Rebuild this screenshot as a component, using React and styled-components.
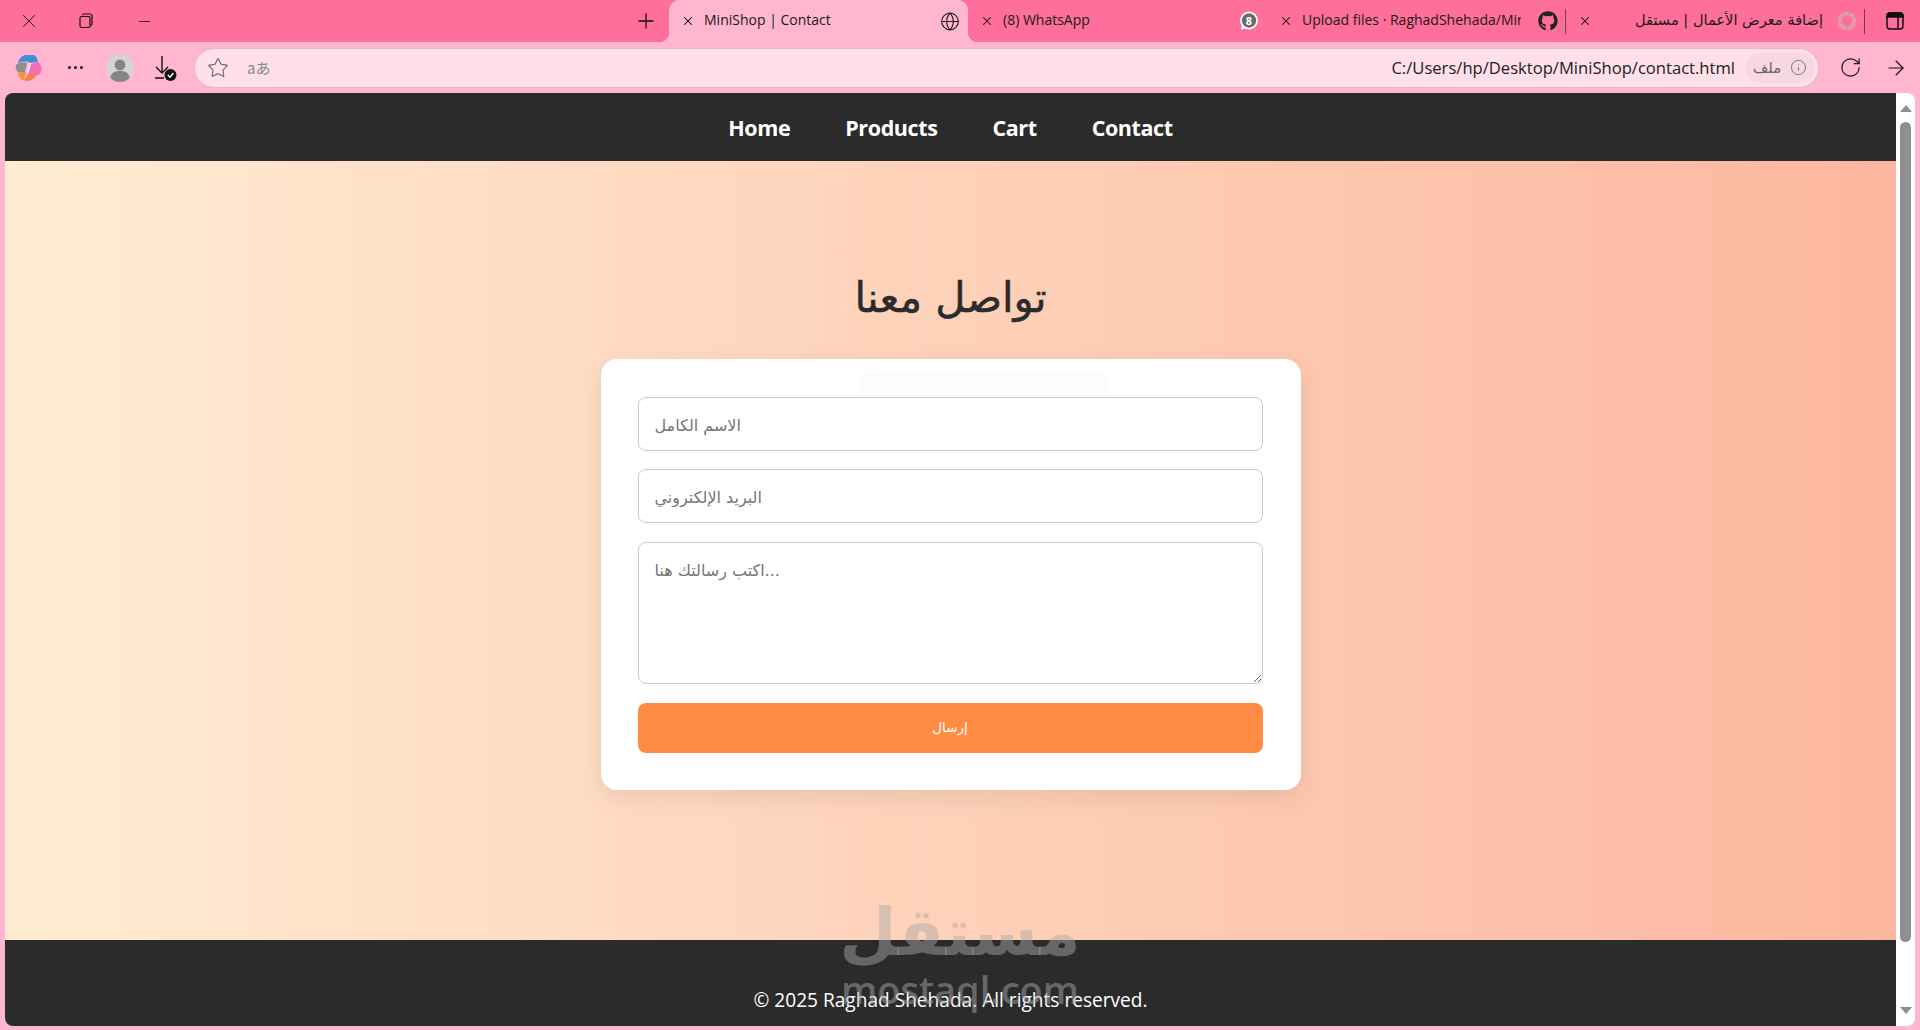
import React from "react";
import styled, { createGlobalStyle } from "styled-components";
import { X, Plus, Minus, Globe, Star, RotateCw, ArrowRight, Info } from "lucide-react";
import { FaGithub } from "react-icons/fa";

const UI_FONT = `"Open Sans", "Noto Sans", "DejaVu Sans", sans-serif`;
const AR_FONT = `"DejaVu Sans", "Noto Sans", sans-serif`;

const GlobalStyle = createGlobalStyle`
  html, body {
    margin: 0;
    height: 100%;
    overflow: hidden;
    background: #ffb6ce;
    font-family: ${UI_FONT};
  }
  * { box-sizing: border-box; }
`;

const TABS = [
  { id: "contact", title: "MiniShop | Contact", active: true, icon: <Globe size={21} strokeWidth={1.4} color="#222" /> },
  { id: "whatsapp", title: "(8) WhatsApp", icon: <WhatsBadge /> },
  { id: "upload", title: "Upload files · RaghadShehada/MiniShop", icon: <FaGithub size={20} color="#222" />, sep: true },
  { id: "mostaql", title: "إضافة معرض الأعمال | مستقل", rtl: true, icon: <Spinner />, sep: true },
];

function WhatsBadge() {
  return (
    <svg width="20" height="22" viewBox="0 0 20 22">
      <circle cx="10" cy="10.5" r="9" fill="#fff" />
      <path d="M3 15 L2 20 L7 18 Z" fill="#fff" />
      <circle cx="10" cy="10.5" r="7.2" fill="#6b6b6b" />
      <text x="10" y="14.5" textAnchor="middle" fontSize="11" fontWeight="700" fill="#fff" fontFamily="Open Sans">8</text>
    </svg>
  );
}

function Spinner() {
  return (
    <svg width="22" height="22" viewBox="0 0 22 22">
      <circle cx="11" cy="11" r="8" fill="none" stroke="#c9b4b9" strokeWidth="4.5" strokeDasharray="1.5 1" />
    </svg>
  );
}

function RestoreIcon() {
  return (
    <svg width="14" height="16" viewBox="0 0 14 16" fill="none" stroke="#111" strokeWidth="1.2">
      <path d="M3.5 2.2 Q3.5 1 5 1 H11 Q13 1 13 3 V11 Q13 12.5 11.5 12.5" />
      <rect x="1" y="3.5" width="10" height="11" rx="1.5" fill="#ff6f9c" />
    </svg>
  );
}

function SidebarIcon() {
  return (
    <svg width="20" height="20" viewBox="0 0 20 20" fill="none" stroke="#111" strokeWidth="1.5">
      <rect x="2" y="2" width="16" height="16" rx="3" />
      <path d="M2 5 Q2 2 5 2 H15 Q18 2 18 5 V6 H2 Z" fill="#111" />
      <path d="M13 6 V18" />
    </svg>
  );
}

function CopilotIcon() {
  return (
    <svg width="30" height="30" viewBox="0 0 30 30">
      <path d="M5 11 C6 4 10 2 14 2 H20 C23 2 24 5 25 9 L17 10 C14 8 8 8 5 11 Z" fill="#3f8fd6" />
      <path d="M3 12 C5 10 10 9 14 10 L12 19 H5 C3 17 2 15 3 12 Z" fill="#8e8e92" />
      <path d="M18 11 L25 9 C28 11 29 15 28 19 C27 22 24 23 21 22 H15 Z" fill="#f46db0" />
      <path d="M5 19 H13 L11 27 C8 28 6 24 5 19 Z" fill="#f9913d" />
      <path d="M11 27 C14 29 20 28 23 22 H15 Z" fill="#f9803d" />
      <path d="M14 20 L16.5 10 H18 L15.5 20 Z" fill="#fff" opacity="0.9" />
    </svg>
  );
}

function ProfileIcon() {
  return (
    <svg width="28" height="28" viewBox="0 0 28 28">
      <circle cx="14" cy="14" r="14" fill="#d4d4d4" />
      <circle cx="14" cy="11" r="5.4" fill="#858585" />
      <path d="M4.5 24 C5 18 9 17 14 17 C19 17 23 18 23.5 24 C21 27 17 28 14 28 C11 28 7 27 4.5 24 Z" fill="#858585" />
    </svg>
  );
}

function DownloadIcon() {
  return (
    <svg width="24" height="28" viewBox="0 0 24 28" fill="none">
      <path d="M8 2 V19 M2 13 L8 19 L14 13 M1 24 H10" stroke="#111" strokeWidth="1.4" />
      <circle cx="16.5" cy="21" r="6" fill="#111" />
      <path d="M13.8 21 L16 23.2 L19.4 19" stroke="#fff" strokeWidth="1.5" />
    </svg>
  );
}

const TabStrip = styled.div`
  display: flex;
  height: 42px;
  background: #ff6f9c;
  color: #1a1a1a;
`;

const WinButton = styled.div`
  width: 58px;
  display: flex;
  align-items: center;
  justify-content: center;
  svg { margin-right: ${(p) => p.$nudge || 0}px; }
`;

const Spacer = styled.div`
  flex: 1;
`;

const NewTab = styled.div`
  width: 46px;
  display: flex;
  align-items: center;
  justify-content: center;
`;

const Tab = styled.div`
  position: relative;
  width: 299px;
  display: flex;
  align-items: center;
  padding: 0 8px 0 12px;
  background: ${(p) => (p.$active ? "#ffb6ce" : "transparent")};
  border-radius: ${(p) => (p.$active ? "10px 10px 0 0" : "0")};
  ${(p) =>
    p.$sep &&
    `
    &::after {
      content: "";
      position: absolute;
      top: 9px;
      right: 0;
      width: 1px;
      height: 25px;
      background: #7a3a50;
    }
  `}
  ${(p) =>
    p.$active &&
    `
    &::before, &::after {
      content: "";
      position: absolute;
      bottom: 0;
      width: 10px;
      height: 10px;
    }
    &::before {
      left: -10px;
      background: radial-gradient(circle at 0 0, transparent 10px, #ffb6ce 10.5px);
    }
    &::after {
      right: -10px;
      background: radial-gradient(circle at 100% 0, transparent 10px, #ffb6ce 10.5px);
    }
  `}
`;

const TabClose = styled.span`
  width: 14px;
  display: flex;
  justify-content: center;
  flex-shrink: 0;
`;

const TabTitle = styled.span`
  flex: 1;
  margin: -2px ${(p) => (p.$rtl ? 14 : 17)}px 0 9px;
  white-space: nowrap;
  overflow: hidden;
  font-size: ${(p) => (p.$rtl ? 14.6 : 14)}px;
  line-height: 20px;
  text-align: ${(p) => (p.$rtl ? "right" : "left")};
  direction: ${(p) => (p.$rtl ? "rtl" : "ltr")};
  font-family: ${(p) => (p.$rtl ? AR_FONT : UI_FONT)};
`;

const TabIcon = styled.span`
  width: 20px;
  height: 22px;
  display: flex;
  align-items: center;
  justify-content: center;
  flex-shrink: 0;
`;

const SideButton = styled.div`
  width: 55px;
  display: flex;
  align-items: center;
  justify-content: center;
  padding-left: 5px;
`;

const Toolbar = styled.div`
  height: 51px;
  display: flex;
  align-items: center;
  padding: 0 2px 0 8px;
  background: #ffb6ce;
`;

const ToolSlot = styled.div`
  width: ${(p) => p.$w}px;
  display: flex;
  align-items: center;
  justify-content: center;
  flex-shrink: 0;
  padding-left: ${(p) => p.$shift || 0}px;
`;

const Dots = styled.span`
  display: flex;
  gap: 3px;
  i {
    width: 3px;
    height: 3px;
    border-radius: 50%;
    background: #111;
  }
`;

const AddressBar = styled.div`
  flex: 1;
  height: 40px;
  margin: 0 9px 0 2px;
  display: flex;
  align-items: center;
  padding: 0 3px 0 12px;
  background: #ffdfea;
  border: 1px solid #e2b7c6;
  border-radius: 20px;
`;

const Translate = styled.span`
  margin-left: 18px;
  font-size: 15px;
  color: #888;
  font-family: "Noto Sans CJK JP", ${UI_FONT};
`;

const Url = styled.span`
  margin-left: auto;
  font-size: 16.6px;
  color: #222;
`;

const SitePill = styled.span`
  margin-left: 10px;
  width: 70px;
  height: 30px;
  display: flex;
  align-items: center;
  justify-content: center;
  gap: 9px;
  border-radius: 15px;
  background: #f6d7e2;
  color: #666;
  font-size: 15px;
  font-family: ${AR_FONT};
`;

const PageFrame = styled.div`
  height: 933px;
  margin: 0 5px;
  display: flex;
  border-radius: 8px;
  overflow: hidden;
`;

const Page = styled.div`
  position: relative;
  flex: 1;
  display: flex;
  flex-direction: column;
`;

const Nav = styled.nav`
  height: 68px;
  display: flex;
  align-items: center;
  justify-content: center;
  gap: 55px;
  padding-top: 1px;
  background: #2b2b2b;
`;

const NavLink = styled.a`
  color: #fff;
  font-size: 21.5px;
  font-weight: 700;
  letter-spacing: -0.4px;
`;

const Main = styled.main`
  flex: 1;
  display: flex;
  flex-direction: column;
  align-items: center;
  padding-top: 107px;
  background: linear-gradient(90deg, #ffecd2, #fcb69f);
`;

const Title = styled.h2`
  margin: 0 0 31px;
  height: 60px;
  line-height: 60px;
  font-size: 41.6px;
  font-weight: 400;
  color: #2b2b2b;
  -webkit-text-stroke: 0.5px #2b2b2b;
  font-family: ${AR_FONT};
`;

const Card = styled.form`
  position: relative;
  width: 700px;
  height: 431px;
  padding: 38px 38px 37px 37px;
  display: flex;
  flex-direction: column;
  gap: 18px;
  background: #fff;
  border-radius: 16px;
  box-shadow: 0 8px 25px rgba(0, 0, 0, 0.08);
`;

const GhostStrip = styled.div`
  position: absolute;
  top: 13px;
  left: 259px;
  width: 247px;
  height: 24px;
  background: #fbfdfc;
`;

const fieldStyle = `
  width: 100%;
  padding: 2px 16px 0;
  border: 1px solid #ccc;
  border-radius: 8px;
  background: #fff;
  color: #222;
  outline: none;
  font-family: ${AR_FONT};
  font-size: 16px;
`;

const Input = styled.input`
  ${fieldStyle}
  height: 54px;
  &::placeholder { color: #757575; }
`;

const Message = styled.textarea`
  ${fieldStyle}
  height: 142px;
  margin-top: 1px;
  padding-top: 18px;
  resize: vertical;
  display: block;
  &::placeholder { color: #757575; }
`;

const Send = styled.button`
  height: 50px;
  margin-top: 1px;
  padding-bottom: 3px;
  border: 0;
  border-radius: 8px;
  background: #ff8c42;
  color: #fff;
  font-size: 13.5px;
  font-weight: 400;
  font-family: ${AR_FONT};
`;

const Footer = styled.footer`
  height: 86px;
  display: flex;
  align-items: flex-end;
  justify-content: center;
  padding-bottom: 13px;
  background: #2b2b2b;
  color: #fff;
  font-size: 19.1px;
`;

const Watermark = styled.div`
  position: absolute;
  left: 840px;
  top: 804px;
  width: 230px;
  display: flex;
  flex-direction: column;
  align-items: center;
  color: rgba(171, 171, 171, 0.47);
  pointer-events: none;
`;

const WatermarkAr = styled.span`
  height: 72px;
  line-height: 72px;
  font-size: 66px;
  font-weight: 700;
  font-family: ${AR_FONT};
`;

const WatermarkEn = styled.span`
  line-height: 40px;
  font-size: 38px;
  font-weight: 600;
`;

const Scrollbar = styled.div`
  width: 19px;
  display: flex;
  flex-direction: column;
  align-items: center;
  padding: 12px 0;
  background: #fff;
`;

const Arrow = styled.div`
  width: 0;
  height: 0;
  border-left: 6.5px solid transparent;
  border-right: 6.5px solid transparent;
  ${(p) => (p.$down ? "border-top: 7px solid #8f8f8f;" : "border-bottom: 7px solid #8f8f8f;")}
`;

const Track = styled.div`
  flex: 1;
  width: 11px;
  margin-top: 10px;
`;

const Thumb = styled.div`
  height: 820px;
  border-radius: 6px;
  background: #8f8f8f;
`;

const App = () => {
  return (
    <>
      <GlobalStyle />
      <TabStrip>
        <WinButton><X size={22} strokeWidth={1} color="#111" /></WinButton>
        <WinButton $nudge={3}><RestoreIcon /></WinButton>
        <WinButton $nudge={2}><Minus size={17} strokeWidth={1.2} color="#111" /></WinButton>
        <Spacer />
        <NewTab><Plus size={24} strokeWidth={1.3} color="#111" /></NewTab>
        {TABS.map((tab) => (
          <Tab key={tab.id} $active={tab.active} $sep={tab.sep}>
            <TabClose><X size={16} strokeWidth={1.8} color="#111" /></TabClose>
            <TabTitle $rtl={tab.rtl}>{tab.title}</TabTitle>
            <TabIcon>{tab.icon}</TabIcon>
          </Tab>
        ))}
        <SideButton><SidebarIcon /></SideButton>
      </TabStrip>

      <Toolbar>
        <ToolSlot $w={40}><CopilotIcon /></ToolSlot>
        <ToolSlot $w={54}><Dots><i /><i /><i /></Dots></ToolSlot>
        <ToolSlot $w={36}><ProfileIcon /></ToolSlot>
        <ToolSlot $w={54} $shift={2}><DownloadIcon /></ToolSlot>
        <AddressBar>
          <Star size={22} strokeWidth={1.2} color="#666" />
          <Translate>aあ</Translate>
          <Url>C:/Users/hp/Desktop/MiniShop/contact.html</Url>
          <SitePill>
            <span>ملف</span>
            <Info size={17} strokeWidth={1.2} color="#666" />
          </SitePill>
        </AddressBar>
        <ToolSlot $w={45}><RotateCw size={23} strokeWidth={1.2} color="#111" /></ToolSlot>
        <ToolSlot $w={45}><ArrowRight size={24} strokeWidth={1.1} color="#111" /></ToolSlot>
      </Toolbar>

      <PageFrame>
        <Page>
          <Nav>
            <NavLink>Home</NavLink>
            <NavLink>Products</NavLink>
            <NavLink>Cart</NavLink>
            <NavLink>Contact</NavLink>
          </Nav>
          <Main>
            <Title>تواصل معنا</Title>
            <Card onSubmit={(e) => e.preventDefault()}>
              <GhostStrip />
              <Input placeholder="الاسم الكامل" />
              <Input placeholder="البريد الإلكتروني" />
              <Message placeholder="اكتب رسالتك هنا..." />
              <Send>إرسال</Send>
            </Card>
          </Main>
          <Footer>© 2025 Raghad Shehada. All rights reserved.</Footer>
          <Watermark>
            <WatermarkAr>مستقل</WatermarkAr>
            <WatermarkEn>mostaql.com</WatermarkEn>
          </Watermark>
        </Page>
        <Scrollbar>
          <Arrow />
          <Track><Thumb /></Track>
          <Arrow $down />
        </Scrollbar>
      </PageFrame>
    </>
  );
};

export default App;
